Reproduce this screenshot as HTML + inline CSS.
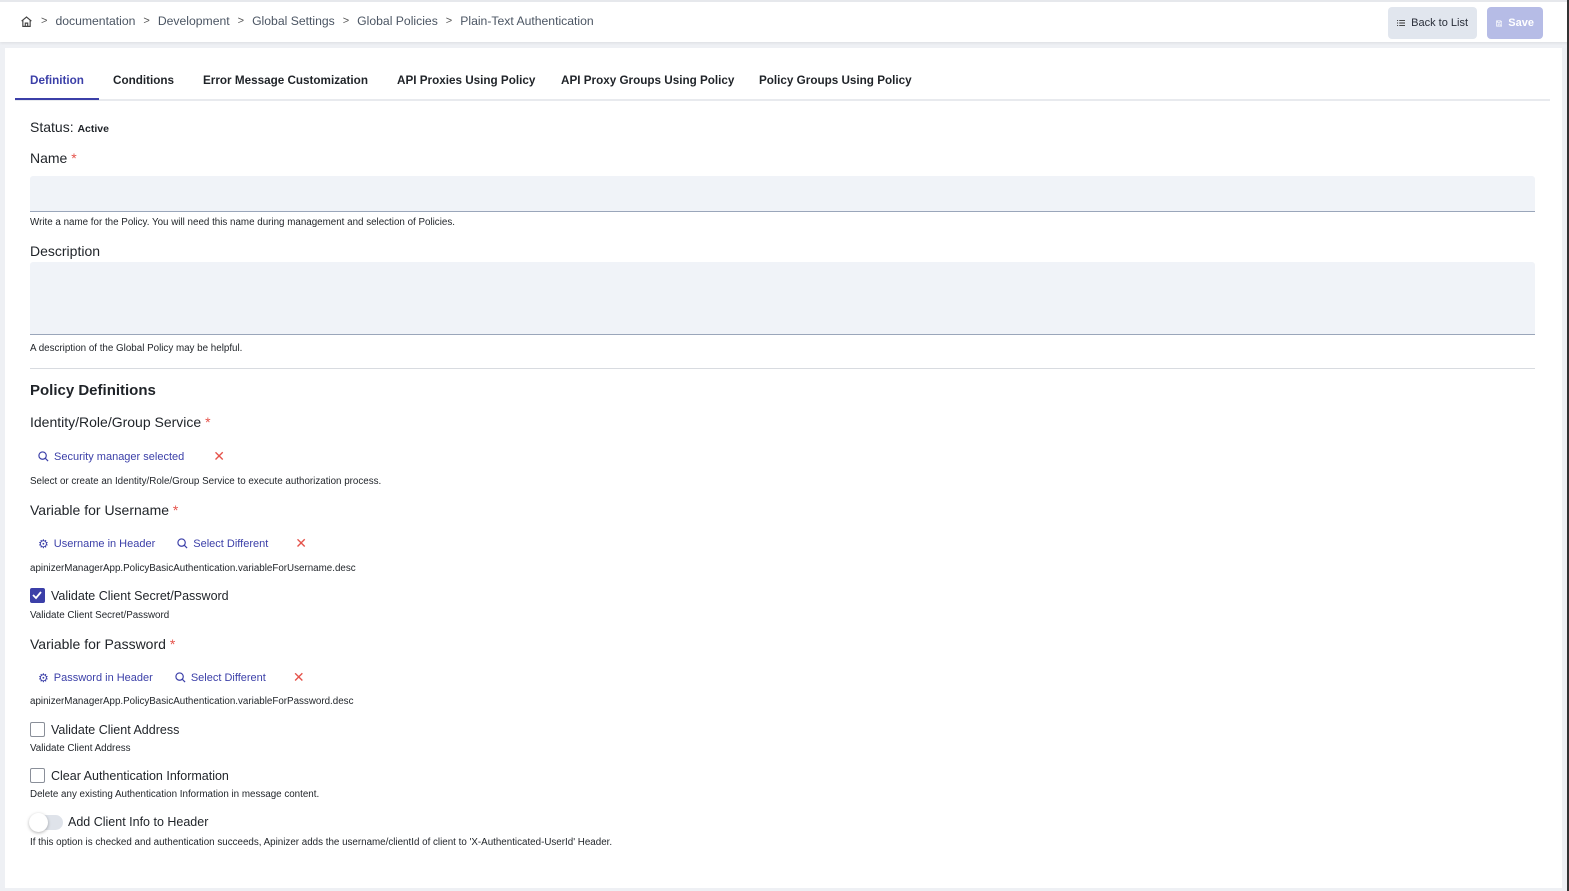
<!DOCTYPE html>
<html><head><meta charset="utf-8"><style>
*{box-sizing:border-box;margin:0;padding:0}
body{width:1569px;height:891px;background:#eef0f4;font-family:"Liberation Sans",sans-serif;color:#1f2328;position:relative;overflow:hidden}
.top{position:absolute;left:0;top:0;width:1569px;height:42px;background:#fff;border-top:2px solid #e6e8ec;box-shadow:0 1px 3px rgba(0,0,0,.08)}
.bc{position:absolute;left:20px;top:12px;font-size:12.2px;color:#4b5563;display:flex;align-items:center;white-space:nowrap}
.bc .s{margin:0 8px;color:#555;font-size:11px}
.btn{position:absolute;top:5px;height:32px;border-radius:4px;font-size:11px;display:flex;align-items:center;gap:6px;padding:0 9px;white-space:nowrap}
.card{position:absolute;left:5px;top:48px;width:1557px;height:840px;background:#fff}
.a{position:absolute;white-space:nowrap}
.tabs{position:absolute;left:10px;top:0;width:1535px;height:53px;border-bottom:2px solid #e8eaee}
.tab{position:absolute;top:26px;font-size:11.7px;font-weight:bold;color:#1f2328;white-space:nowrap}
.lbl{font-size:14px;color:#1f2328}
.req{color:#e5534b}
.hint{font-size:9.8px;color:#1f2328}
.inp{position:absolute;left:25px;width:1505px;background:#f0f3f8;border-bottom:1px solid #9aa6ba;border-radius:3px 3px 0 0}
.link{font-size:11px;color:#3b3fa8;display:flex;align-items:center;gap:5px}
.x{color:#e5534b;font-size:14px}
.cb{position:absolute;width:15px;height:15px;border:1.5px solid #8a8f99;border-radius:2px}
</style></head><body>
<div class="top">
 <div class="bc">
  <svg width="13" height="13" viewBox="0 0 16 16" fill="none" stroke="#444" stroke-width="1.4"><path d="M2 7.5L8 2.5l6 5M3.5 6.5V14h9V6.5M6.5 14v-4h3v4"/></svg>
  <span class="s">&gt;</span>documentation<span class="s">&gt;</span>Development<span class="s">&gt;</span>Global Settings<span class="s">&gt;</span>Global Policies<span class="s">&gt;</span>Plain-Text Authentication
 </div>
 <div class="btn" style="left:1388px;width:89px;background:#e1e6ee;color:#2a2f3a">
  <svg width="11" height="10" viewBox="0 0 11 10" stroke="#333" stroke-width="1.2"><path d="M0 1.5h1.5M3 1.5h8M0 5h1.5M3 5h8M0 8.5h1.5M3 8.5h8"/></svg>Back to List</div>
 <div class="btn" style="left:1487px;width:56px;background:#b6bce6;color:#fff;font-weight:bold">
  <svg width="11" height="11" viewBox="0 0 12 12" fill="none" stroke="#fff" stroke-width="1.3"><path d="M1 1h8l2 2v8H1z M3 1v3h5V1 M4 7h4v4H4z"/></svg>Save</div>
</div>
<div class="card">
 <div class="tabs">
  <div class="tab" style="left:15px;color:#3b3fa8">Definition</div>
  <div style="position:absolute;left:0;top:50px;width:84px;height:2px;background:#3b3fa8"></div>
  <div class="tab" style="left:98px">Conditions</div>
  <div class="tab" style="left:188px">Error Message Customization</div>
  <div class="tab" style="left:382px">API Proxies Using Policy</div>
  <div class="tab" style="left:546px">API Proxy Groups Using Policy</div>
  <div class="tab" style="left:744px">Policy Groups Using Policy</div>
 </div>
 <div class="a lbl" style="left:25px;top:71px">Status: <b style="font-size:10.5px">Active</b></div>
 <div class="a lbl" style="left:25px;top:102px">Name <span class="req">*</span></div>
 <div class="inp" style="top:128px;height:36px"></div>
 <div class="a hint" style="left:25px;top:169px">Write a name for the Policy. You will need this name during management and selection of Policies.</div>
 <div class="a lbl" style="left:25px;top:195px">Description</div>
 <div class="inp" style="top:214px;height:73px"></div>
 <div class="a hint" style="left:25px;top:295px">A description of the Global Policy may be helpful.</div>
 <div style="position:absolute;left:25px;top:320px;width:1505px;height:1px;background:#d8dbe0"></div>
 <div class="a" style="left:25px;top:334px;font-size:15px;font-weight:bold">Policy Definitions</div>
 <div class="a lbl" style="left:25px;top:366px">Identity/Role/Group Service <span class="req">*</span></div>
 <div class="a link" style="left:33px;top:400px"><svg width="11" height="11" viewBox="0 0 12 12" fill="none" stroke="#3b3fa8" stroke-width="1.3"><circle cx="5" cy="5" r="4"/><path d="M8 8l3 3"/></svg>Security manager selected<span class="x" style="margin-left:24px">✕</span></div>
 <div class="a hint" style="left:25px;top:428px">Select or create an Identity/Role/Group Service to execute authorization process.</div>
 <div class="a lbl" style="left:25px;top:454px">Variable for Username <span class="req">*</span></div>
 <div class="a link" style="left:33px;top:487px"><span style="font-size:12px">⚙</span>Username in Header<span style="width:12px"></span><svg width="11" height="11" viewBox="0 0 12 12" fill="none" stroke="#3b3fa8" stroke-width="1.3"><circle cx="5" cy="5" r="4"/><path d="M8 8l3 3"/></svg>Select Different<span class="x" style="margin-left:22px">✕</span></div>
 <div class="a hint" style="left:25px;top:515px">apinizerManagerApp.PolicyBasicAuthentication.variableForUsername.desc</div>
 <div class="cb" style="left:25px;top:540px;background:#3b3fa8;border-color:#3b3fa8"><svg width="12" height="12" viewBox="0 0 12 12" style="position:absolute;left:0;top:0" fill="none" stroke="#fff" stroke-width="1.8"><path d="M2 6l3 3 5-6"/></svg></div>
 <div class="a" style="left:46px;top:541px;font-size:12.5px">Validate Client Secret/Password</div>
 <div class="a hint" style="left:25px;top:562px">Validate Client Secret/Password</div>
 <div class="a lbl" style="left:25px;top:588px">Variable for Password <span class="req">*</span></div>
 <div class="a link" style="left:33px;top:621px"><span style="font-size:12px">⚙</span>Password in Header<span style="width:12px"></span><svg width="11" height="11" viewBox="0 0 12 12" fill="none" stroke="#3b3fa8" stroke-width="1.3"><circle cx="5" cy="5" r="4"/><path d="M8 8l3 3"/></svg>Select Different<span class="x" style="margin-left:22px">✕</span></div>
 <div class="a hint" style="left:25px;top:648px">apinizerManagerApp.PolicyBasicAuthentication.variableForPassword.desc</div>
 <div class="cb" style="left:25px;top:674px"></div>
 <div class="a" style="left:46px;top:675px;font-size:12.5px">Validate Client Address</div>
 <div class="a hint" style="left:25px;top:695px">Validate Client Address</div>
 <div class="cb" style="left:25px;top:720px"></div>
 <div class="a" style="left:46px;top:721px;font-size:12.5px">Clear Authentication Information</div>
 <div class="a hint" style="left:25px;top:741px">Delete any existing Authentication Information in message content.</div>
 <div style="position:absolute;left:25px;top:767px;width:33px;height:15px;border-radius:8px;background:#dfe3ea"></div>
 <div style="position:absolute;left:24px;top:765px;width:19px;height:19px;border-radius:50%;background:#fff;box-shadow:0 1px 3px rgba(0,0,0,.3)"></div>
 <div class="a" style="left:63px;top:767px;font-size:12.5px">Add Client Info to Header</div>
 <div class="a hint" style="left:25px;top:789px">If this option is checked and authentication succeeds, Apinizer adds the username/clientId of client to 'X-Authenticated-UserId' Header.</div>
</div>
<div style="position:absolute;left:1567px;top:0;width:2px;height:891px;background:#333"></div>
</body></html>
